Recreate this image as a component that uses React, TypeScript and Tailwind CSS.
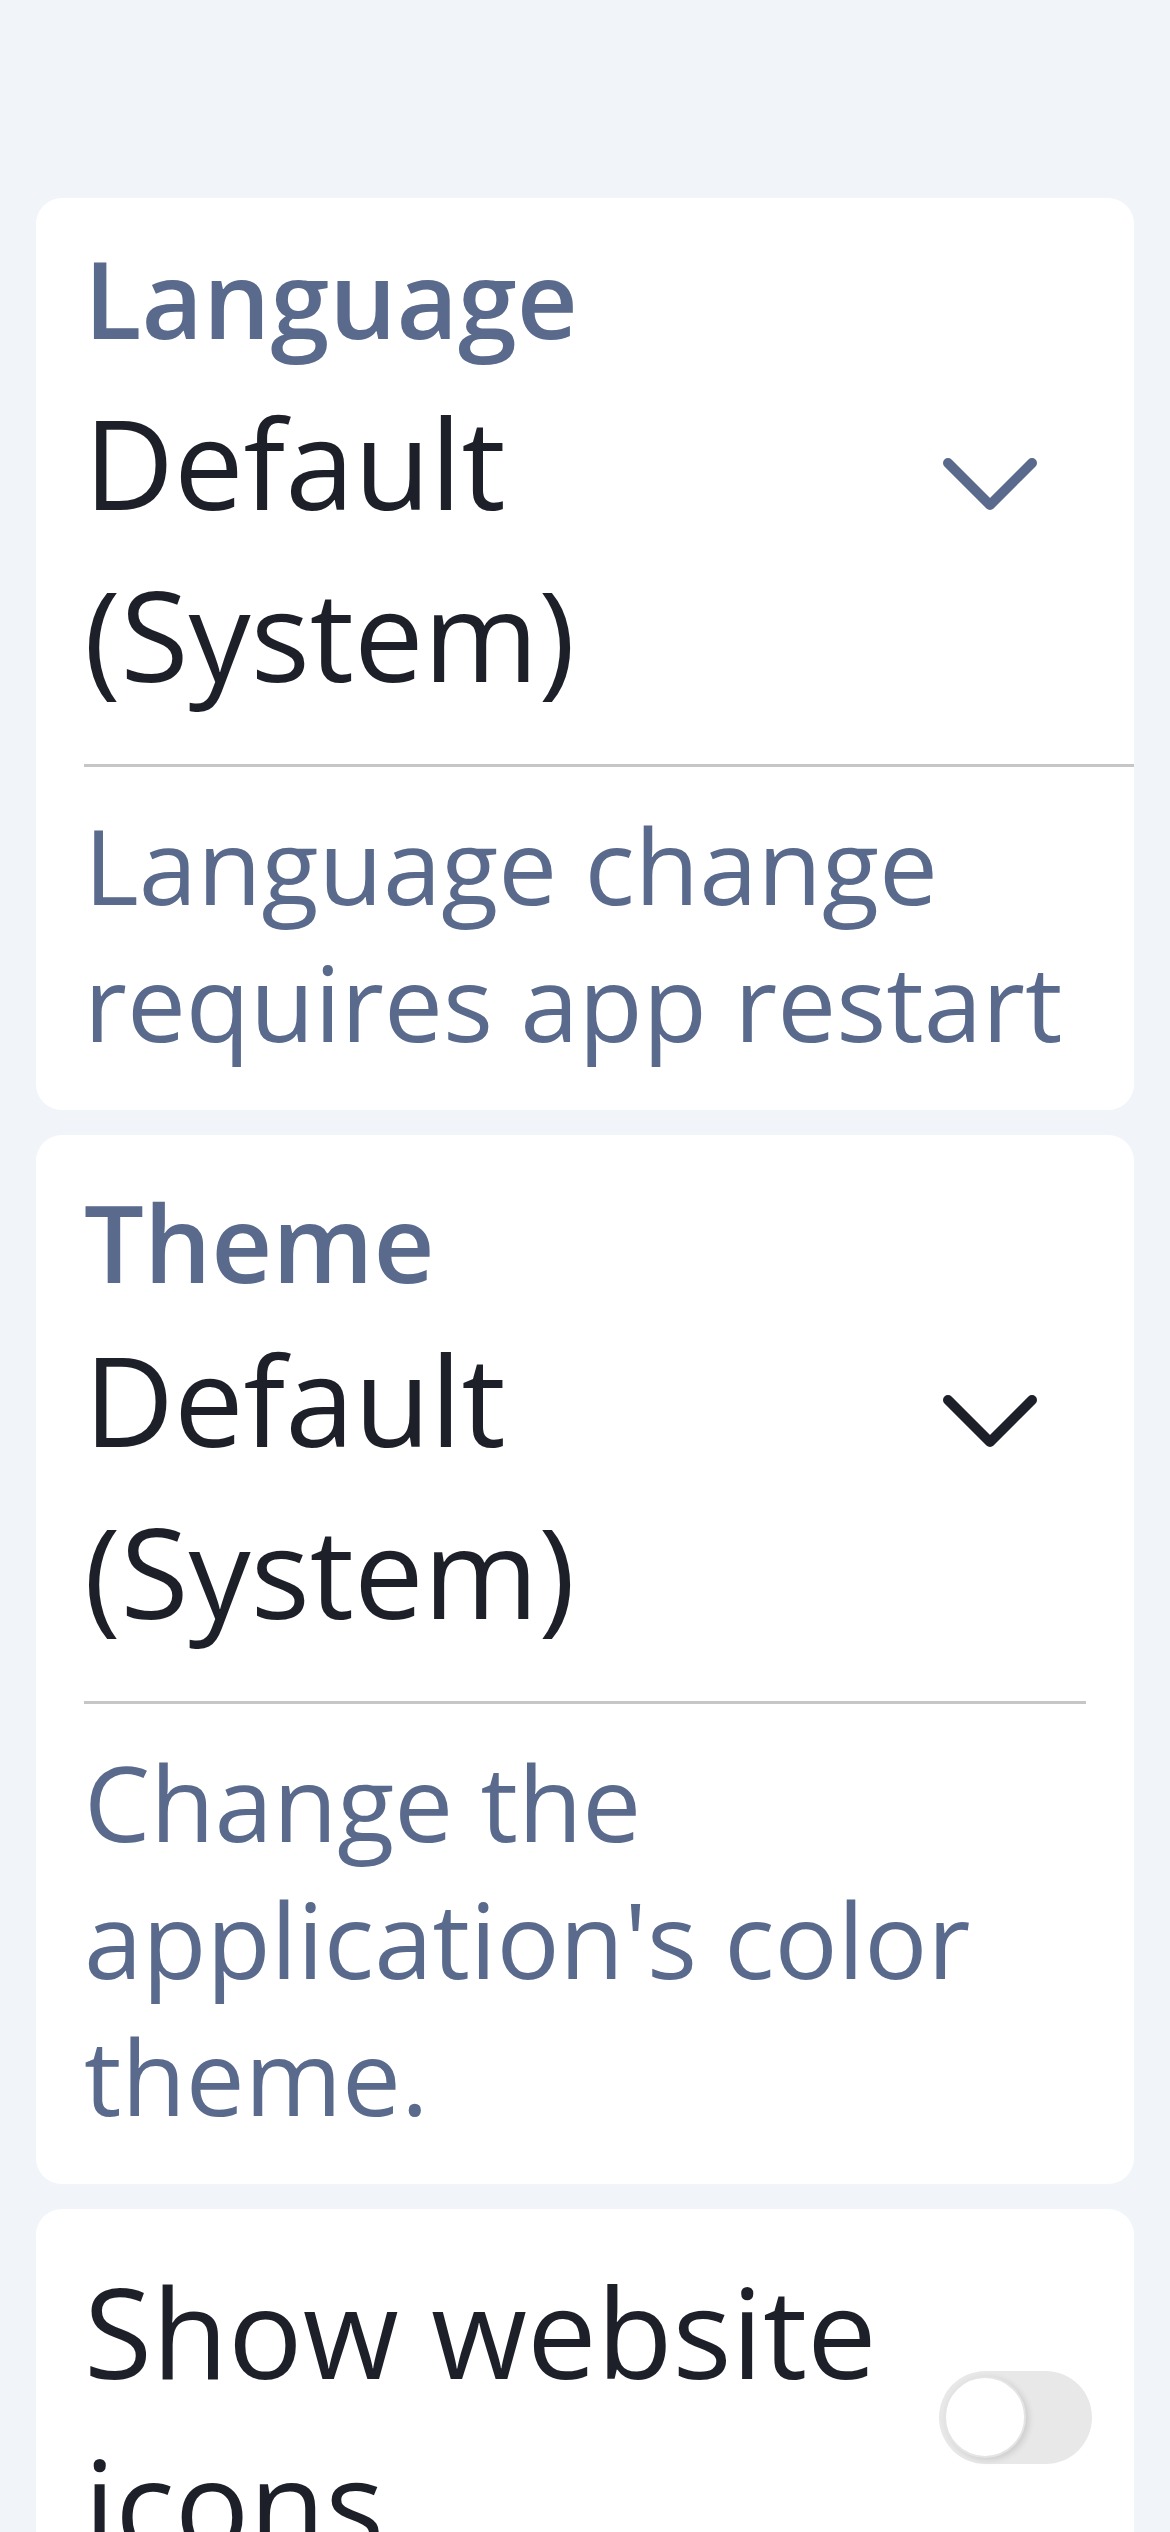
import React from 'react';

const Chevron = ({ className }: { className: string }) => (
    <svg width="94" height="52" viewBox="0 0 94 52" fill="none" className={className}>
        <polyline points="5,5 47,47 89,5" stroke="currentColor" strokeWidth="10" strokeLinecap="round" strokeLinejoin="round" />
    </svg>
);

type SelectCardProps = {
    label: string;
    value: string;
    description: string;
    chevronColor: string;
    labelClass: string;
    dividerClass: string;
};

const SelectCard = ({ label, value, description, chevronColor, labelClass, dividerClass }: SelectCardProps) => (
    <section className="bg-white rounded-[26px] pl-[48px] pr-[48px] pt-[23px] pb-[40px]">
        <div className={`text-[106px] font-semibold text-[#5a6a8c] ${labelClass}`}>{label}</div>
        <div className="flex items-start">
            <div className="flex-1 text-[124px] leading-[172px] text-[#1d2029]">{value}</div>
            <Chevron className={`mt-[82px] mr-[49px] shrink-0 ${chevronColor}`} />
        </div>
        <div className={`mt-[44px] h-[3px] bg-[#c6c6c6] ${dividerClass}`} />
        <p className="mt-[29px] text-[105px] leading-[137px] text-[#5a6a8c]">{description}</p>
    </section>
);

const Toggle = () => (
    <div className="w-[153px] h-[93px] rounded-full bg-[#e8e8e8] flex items-center pl-[5px] shrink-0">
        <div className="w-[82px] h-[82px] rounded-full bg-white border-[2px] border-[#e4e4e4] shadow-[3px_2px_6px_rgba(0,0,0,0.12)]" />
    </div>
);

export default function App() {
    return (
        <div className="min-h-screen bg-[#f1f5f9] px-[36px] pt-[198px] pb-[40px] flex flex-col gap-[25px] font-['Open_Sans',sans-serif]">
            <SelectCard
                label="Language"
                value="Default (System)"
                description="Language change requires app restart"
                chevronColor="text-[#5a6a8c]"
                labelClass="leading-[155px]"
                dividerClass="mr-[-48px]"
            />
            <SelectCard
                label="Theme"
                value="Default (System)"
                description="Change the application's color theme."
                chevronColor="text-[#1d2029]"
                labelClass="pt-[14px] leading-[141px]"
                dividerClass=""
            />
            <section className="bg-white rounded-[26px] pl-[48px] pr-[42px] pt-[36px] pb-[40px]">
                <div className="flex items-center gap-[40px]">
                    <div className="flex-1 text-[124px] leading-[172px] text-[#1d2029]">Show website icons</div>
                    <Toggle />
                </div>
            </section>
        </div>
    );
}
